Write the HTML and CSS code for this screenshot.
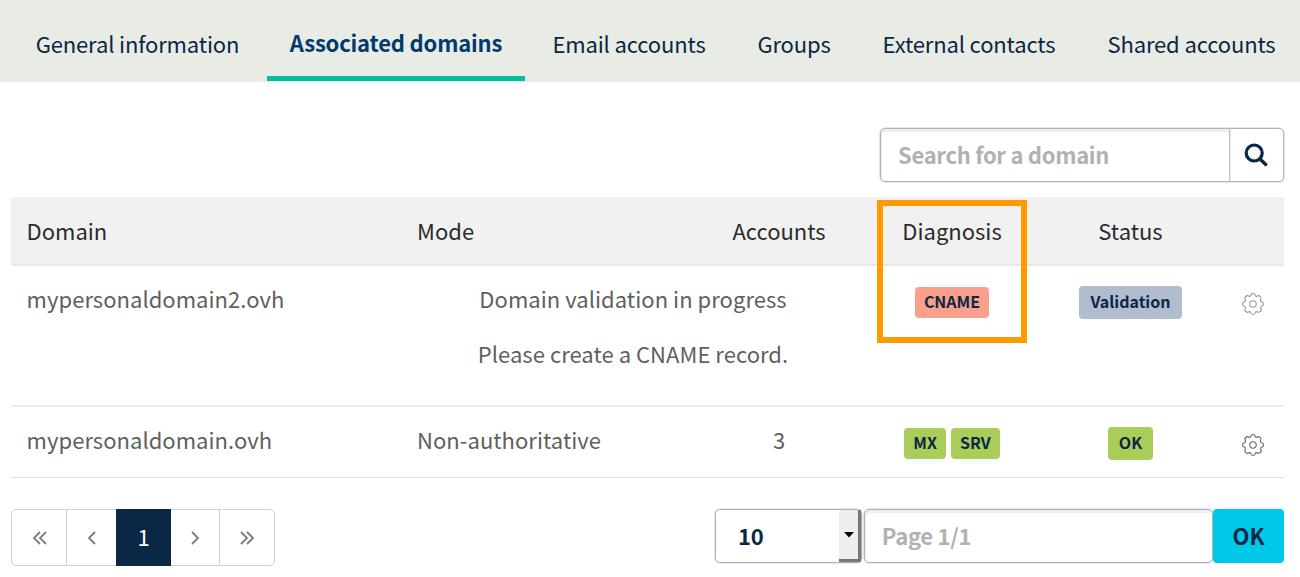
FILE: index.html
```html
<!DOCTYPE html>
<html lang="en">
<head>
<meta charset="utf-8">
<title>Associated domains</title>
<link rel="stylesheet" href="styles.css">
</head>
<body>
<svg width="0" height="0" class="sprite">
  <symbol id="gear" viewBox="0 0 24 24">
    <path d="M9.800 3.500Q10 1.500 12 1.500T14.200 3.500Q14.800 4.700 16 4.200Q17.700 2.800 19.200 4.500T19.500 8Q19.200 9.300 20.400 9.800Q22.500 10 22.500 12T20.400 14.200Q19.200 14.700 19.600 16Q21.100 17.800 19.400 19.400T16 19.700Q14.800 19.300 14.200 20.500Q14 22.500 12 22.500T9.800 20.500Q9.200 19.300 8 19.700Q6.200 21.100 4.600 19.400T4.400 16Q4.800 14.700 3.600 14.200Q1.500 14 1.500 12T3.600 9.800Q4.800 9.300 4.500 8Q3.100 6.200 4.800 4.500T8 4.200Q9.200 4.700 9.800 3.500Z"/>
    <circle cx="12" cy="12" r="3.200"/>
  </symbol>
</svg>

<nav class="tabs">
  <a class="tab"><span>General information</span></a>
  <a class="tab tab-active"><span>Associated domains</span></a>
  <a class="tab"><span>Email accounts</span></a>
  <a class="tab"><span>Groups</span></a>
  <a class="tab"><span>External contacts</span></a>
  <a class="tab"><span>Shared accounts</span></a>
</nav>

<main class="content">
  <div class="search">
    <div class="search-field">Search for a domain</div>
    <div class="search-button">
      <svg width="24" height="24" viewBox="0 0 24 24" fill="none" stroke="#0b2746"><circle cx="10.200" cy="10" r="8" stroke-width="3.200"/><path d="M16 16L21.700 21.400" stroke-width="3.400" stroke-linecap="round"/></svg>
    </div>
  </div>

  <section class="table">
    <div class="row head">
      <div>Domain</div><div class="mode">Mode</div><div class="center">Accounts</div><div class="center">Diagnosis</div><div class="center">Status</div><div></div>
    </div>
    <div class="row first">
      <div class="name">mypersonaldomain2.ovh</div>
      <div class="message"><p class="progress">Domain validation in progress</p><p class="create">Please create a CNAME record.</p></div>
      <div class="badges"><span class="badge red">CNAME</span></div>
      <div class="badges"><span class="badge status grey">Validation</span></div>
      <div class="action"><svg class="gear light" width="24" height="24"><use href="#gear"/></svg></div>
    </div>
    <div class="row second">
      <div class="name">mypersonaldomain.ovh</div>
      <div class="mode">Non-authoritative</div>
      <div class="center">3</div>
      <div class="badges"><span class="badge mx">MX</span><span class="badge srv">SRV</span></div>
      <div class="badges"><span class="badge status ok">OK</span></div>
      <div class="action"><svg class="gear" width="24" height="24"><use href="#gear"/></svg></div>
    </div>
    <div class="highlight"></div>
  </section>

  <footer class="footer">
    <div class="pager">
      <span class="page first-page"><svg width="16" height="16"><path d="M8 2L2 8L8 14M14 2L8 8L14 14"/></svg></span>
      <span class="page prev"><svg width="16" height="16"><path d="M11 2L5 8L11 14"/></svg></span>
      <span class="page current">1</span>
      <span class="page next"><svg width="16" height="16"><path d="M5 2L11 8L5 14"/></svg></span>
      <span class="page last-page"><svg width="16" height="16"><path d="M2 2L8 8L2 14M8 2L14 8L8 14"/></svg></span>
    </div>
    <div class="page-size"><span>10</span><i class="arrow"><svg width="10" height="6"><path d="M0 0H10L5 5.500Z"/></svg></i></div>
    <div class="page-input">Page 1/1</div>
    <div class="submit">OK</div>
  </footer>
</main>
</body>
</html>
```

FILE: styles.css
```css
* { box-sizing: border-box; }
body {
  margin: 0;
  width: 1300px;
  height: 577px;
  overflow: hidden;
  background: #fff;
  color: #606060;
  font: 22px/32px "Noto Sans CJK SC", "Noto Sans", sans-serif;
}
p { margin: 0; }
svg { display: block; }
.sprite { position: absolute; }

.tabs {
  display: grid;
  grid-template-columns: 259px 258px 208px 122px 228px 217px;
  height: 82px;
  padding-left: 8px;
  background: #e9ebe5;
  color: #0b2746;
  letter-spacing: -0.14px;
}
.tab { padding-top: 27px; text-align: center; white-space: nowrap; }
.tab-active {
  height: 81px;
  padding-top: 26px;
  border-bottom: 5px solid #00bea0;
  color: #003b70;
  font-weight: 700;
  letter-spacing: -0.18px;
}

.content { padding: 46px 16px 0 11px; }
.search { display: flex; justify-content: flex-end; height: 54px; }
.search-field, .page-input {
  border: 1px solid #b2b2b5;
  border-radius: 5px;
  box-shadow: inset 1px 3px 0 #eeeef4, 0 0 0 0.5px #d0d0d3;
  padding: 9px 17px;
  color: #b1b1b1;
  font-weight: 700;
  letter-spacing: -0.28px;
}
.search-field { width: 350px; border-radius: 5px 0 0 5px; }
.search-button {
  display: flex;
  align-items: center;
  justify-content: center;
  width: 54px;
  padding-right: 2px;
  border: 1px solid #b2b2b5;
  border-left: 0;
  border-radius: 0 5px 5px 0;
  box-shadow: 0 0 0 0.5px #d0d0d3;
}

.table { position: relative; margin-top: 15px; }
.row { display: grid; grid-template-columns: 391px 292px 170px 176px 181px 63px; }
.row > div { padding-left: 15.6px; white-space: nowrap; }
.row > .mode { padding-left: 15px; letter-spacing: 0.04px; }
.row > .center { padding-left: 0; text-align: center; }
.head {
  height: 69px;
  padding-top: 17px;
  background: #f1f1f1;
  border-bottom: 2px solid #e9e9e9;
  color: #2b2b2b;
}
.first { height: 141px; padding-top: 16px; border-bottom: 2px solid #ececec; }
.second { height: 71px; padding-top: 16px; border-bottom: 1px solid #e1e1e1; }
.name { letter-spacing: 0.03px; }
.row > .message { grid-column: 2 / 4; padding: 0; text-align: center; letter-spacing: 0.04px; }
.create { margin-top: 23px; }
.row > .badges {
  display: flex;
  justify-content: center;
  align-items: center;
  gap: 5px;
  height: 40px;
  padding: 0;
}
.badge {
  height: 31px;
  padding: 0 9px;
  border-radius: 4px;
  background: #a9cd58;
  color: #0b2746;
  font-size: 16px;
  font-weight: 700;
  line-height: 28px;
}
.red { background: #f99f8b; }
.status { height: 33px; padding: 0 11px; line-height: 30px; }
.grey { background: #b1bdce; }
.row > .action { display: flex; justify-content: center; padding: 10px 0 0; }
.gear { fill: none; stroke: #666; stroke-width: 1.1; }
.light { stroke: #999; }
.highlight {
  position: absolute;
  left: 866px;
  top: 3px;
  width: 150px;
  height: 143px;
  border: 6px solid #ff9900;
}

.footer { display: flex; margin-top: 31px; }
.pager { display: flex; height: 57px; margin-right: 440px; }
.page {
  display: flex;
  align-items: center;
  justify-content: center;
  border: 1px solid #d0d0d0;
  border-width: 1px 0;
}
.page svg { fill: none; stroke: #7b7b7b; stroke-width: 1.8; }
.first-page { width: 56px; padding-left: 2px; border-left-width: 1px; border-right-width: 1px; border-radius: 5px 0 0 5px; }
.prev { width: 49px; }
.current { width: 55px; padding-bottom: 3px; background: #0b2746; border-color: #0b2746; color: #fff; }
.next { width: 48px; }
.last-page { width: 56px; padding-right: 1px; border-left-width: 1px; border-right-width: 1px; border-radius: 0 5px 5px 0; }
.page-size {
  display: flex;
  justify-content: space-between;
  width: 147px;
  height: 54px;
  border: 1px solid #b2b2b5;
  border-radius: 5px;
  box-shadow: 0 0 0 0.5px #d0d0d3;
  color: #0b2746;
  font-weight: 700;
  letter-spacing: -0.3px;
}
.page-size span { padding: 9px 0 0 22px; }
.arrow {
  display: flex;
  align-items: center;
  justify-content: center;
  width: 22px;
  padding-left: 2px;
  background: #eee;
  border-right: 3px solid #777;
  border-bottom: 3px solid #777;
}
.page-input { width: 350px; height: 54px; margin: 0 0 0 2px; }
.submit {
  width: 71px;
  height: 54px;
  padding-top: 10px;
  border-radius: 4px;
  background: #00c8e9;
  color: #0b2746;
  font-weight: 700;
  text-align: center;
}
```
